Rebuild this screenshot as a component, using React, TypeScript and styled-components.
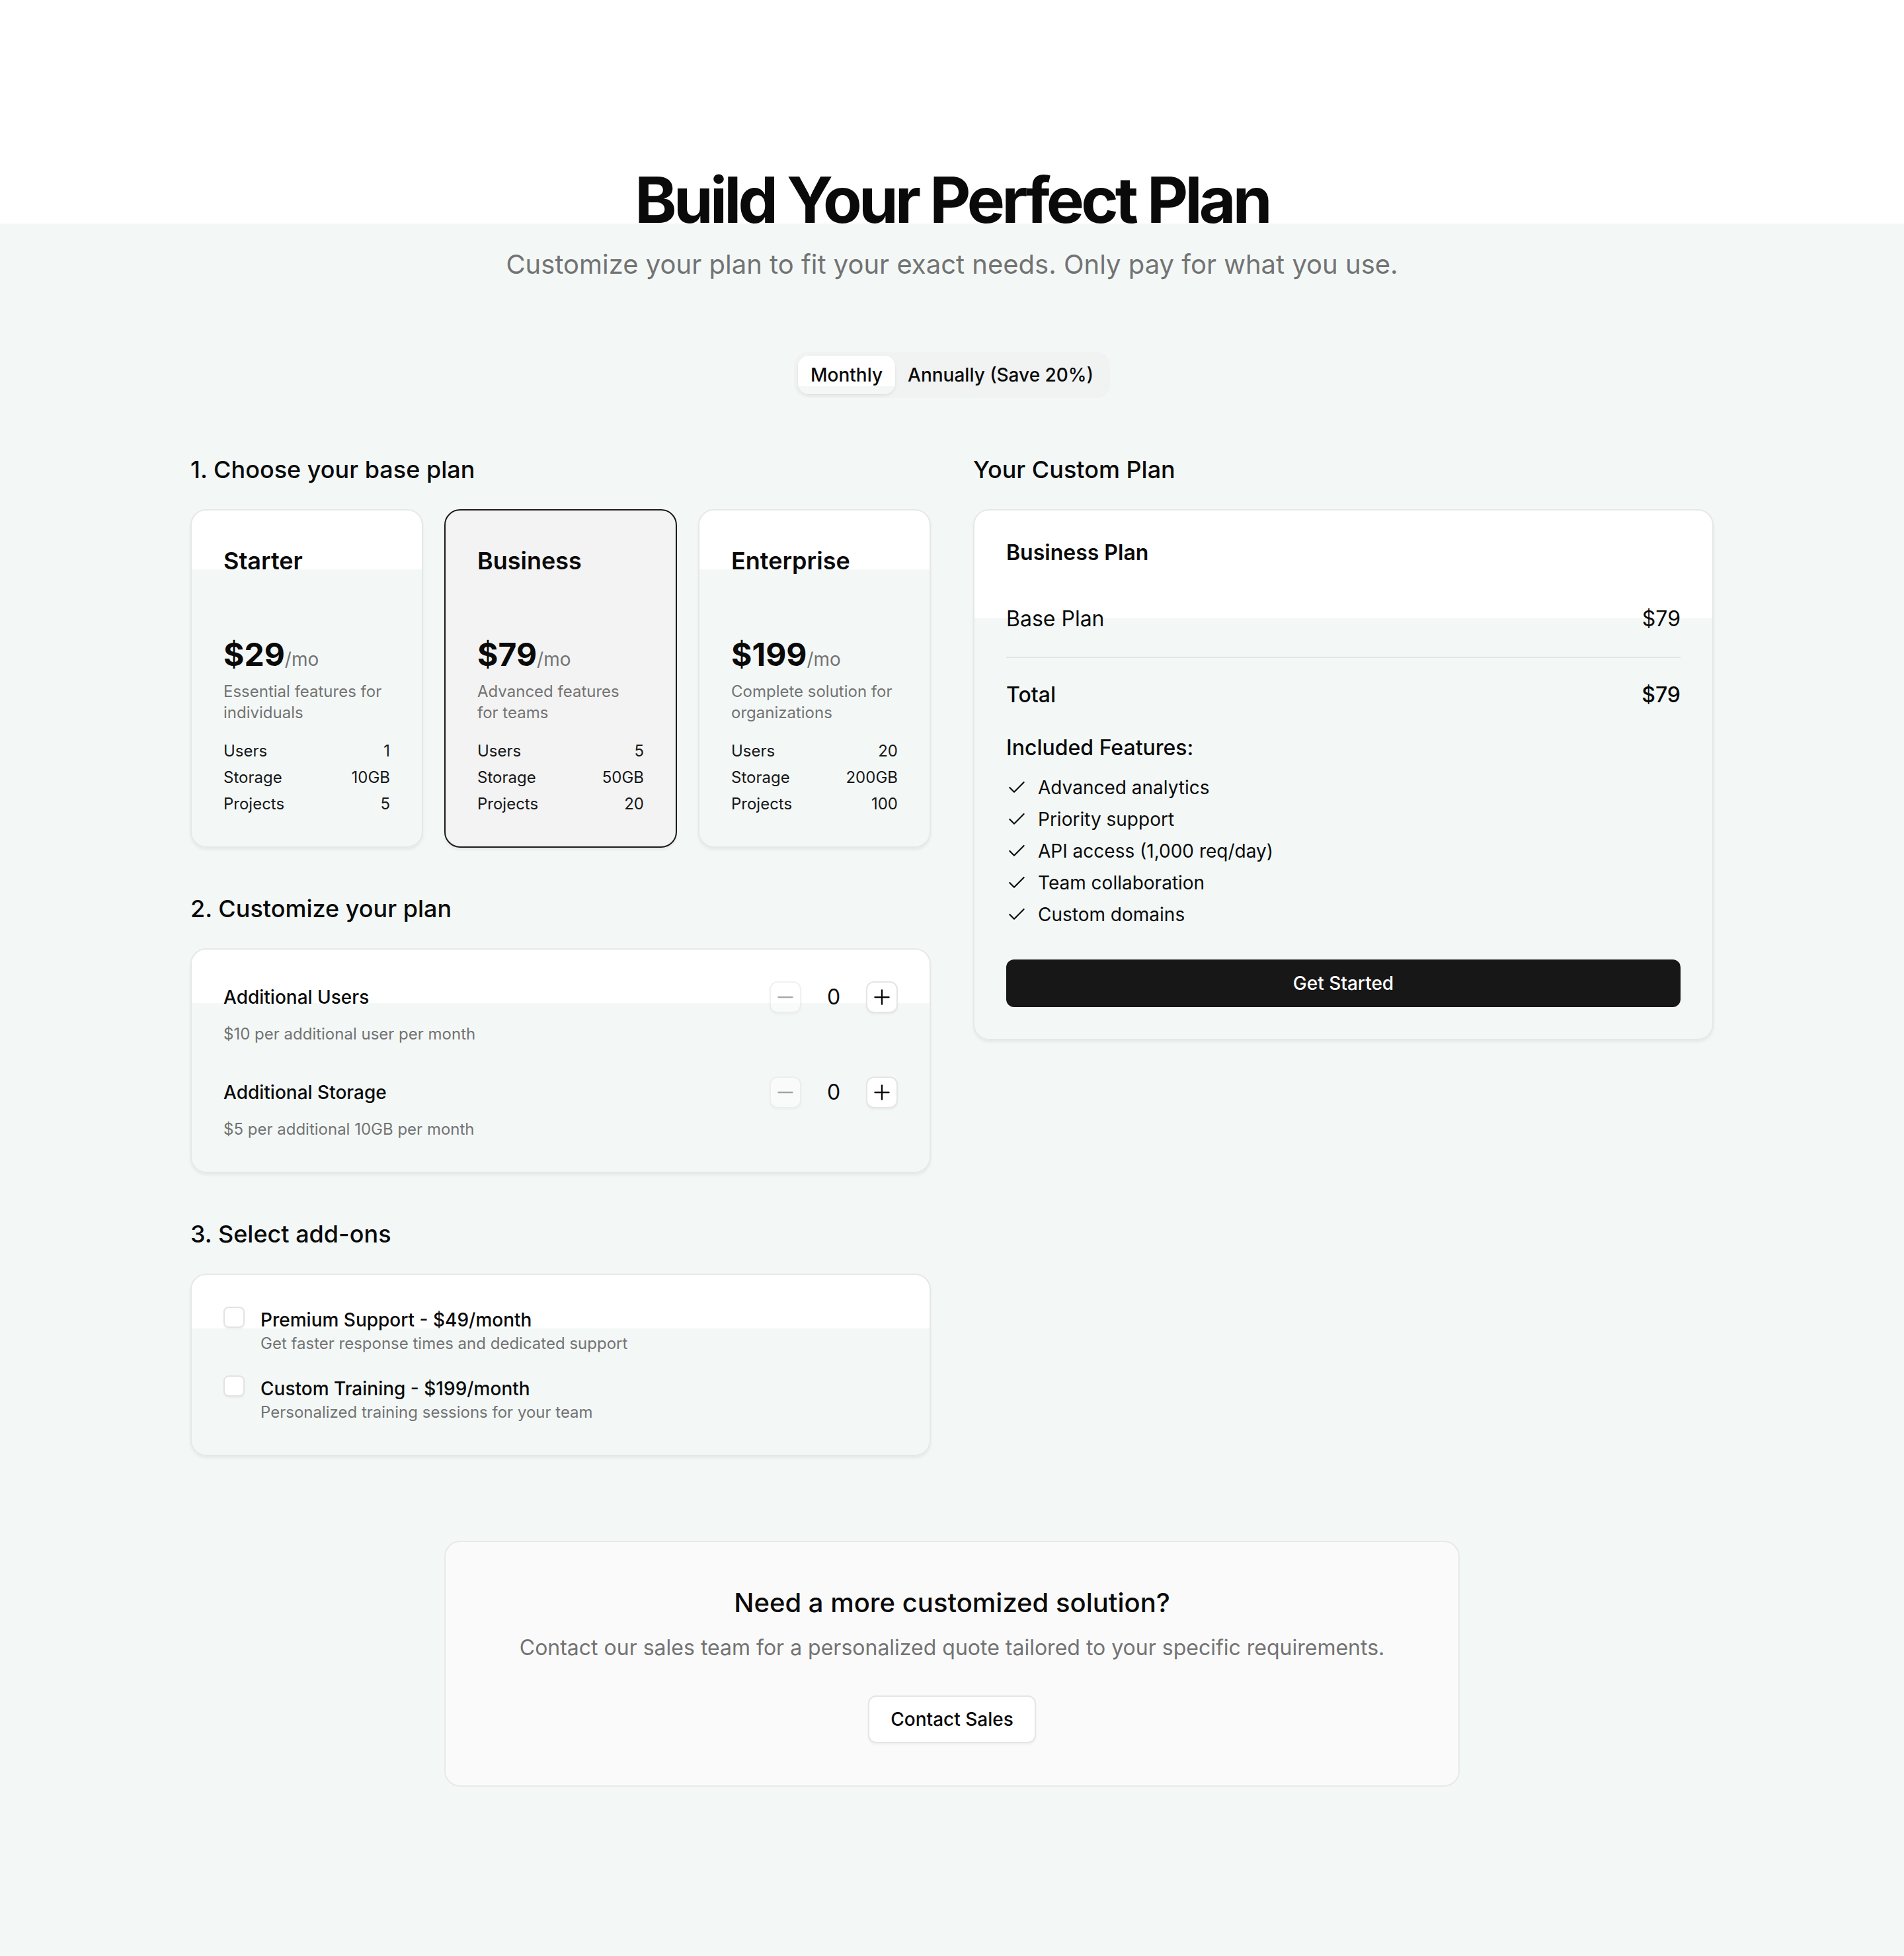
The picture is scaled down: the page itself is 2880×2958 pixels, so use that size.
import styled, { createGlobalStyle } from "styled-components";
import { Check, Minus, Plus } from "lucide-react";

const MINT = "#f3f8f7";

const GlobalStyle = createGlobalStyle`
  html {
    background: ${MINT} linear-gradient(#ffffff, #ffffff) no-repeat;
    background-size: 100% 338px;
  }
  body {
    margin: 0;
    font-family: Inter, "Noto Sans", "Liberation Sans", sans-serif;
    color: #0a0a0a;
  }
  * { box-sizing: border-box; }
`;

const Page = styled.div`
  width: 2304px;
  margin: 0 auto;
  padding: 254px 0 256px;
`;

const Header = styled.header`
  text-align: center;
`;

const Title = styled.h1`
  margin: 0;
  font-size: 96px;
  line-height: 96px;
  font-weight: 700;
  letter-spacing: -0.05em;
  color: #0a0a0a;
`;

const Subtitle = styled.p`
  margin: 22px 0 0;
  font-size: 40px;
  line-height: 56px;
  color: #737373;
`;

const ToggleWrap = styled.div`
  display: flex;
  justify-content: center;
  margin-top: 104px;
`;

const Toggle = styled.div`
  display: inline-flex;
  padding: 6px;
  border-radius: 20px;
  background: #f1f2f2;
`;

const ToggleButton = styled.button<{ $active?: boolean }>`
  height: 58px;
  padding: 0 19px;
  border: none;
  border-radius: 16px;
  font-family: inherit;
  font-size: 28px;
  font-weight: 500;
  color: #0a0a0a;
  background: ${(p) => (p.$active ? `linear-gradient(#fff 0 46px, ${MINT} 46px)` : "transparent")};
  box-shadow: ${(p) => (p.$active ? "0 2px 4px rgba(0,0,0,0.08)" : "none")};
`;

const Columns = styled.div`
  display: grid;
  grid-template-columns: 1120px 1120px;
  gap: 64px;
  align-items: start;
  margin-top: 80px;
`;

const Column = styled.div`
  display: flex;
  flex-direction: column;
  gap: 64px;
`;

const Section = styled.section``;

const SectionTitle = styled.h2`
  margin: 0 0 32px;
  font-size: 36px;
  line-height: 56px;
  font-weight: 500;
`;

const Card = styled.div<{ $split?: number }>`
  border: 2px solid #e6e8e8;
  border-radius: 24px;
  padding: 48px;
  background: ${(p) =>
    p.$split ? `linear-gradient(#fff 0 ${p.$split}px, ${MINT} ${p.$split}px)` : "#fff"};
  box-shadow: 0 3px 4px rgba(0, 0, 0, 0.06);
`;

const PlanGrid = styled.div`
  display: grid;
  grid-template-columns: repeat(3, 1fr);
  gap: 32px;
`;

const PlanCard = styled(Card)<{ $selected?: boolean }>`
  padding-bottom: 44px;
  ${(p) =>
    p.$selected &&
    `
    border-color: #1a1a1a;
    background: #f3f3f3;
  `}
`;

const PlanName = styled.h3`
  margin: 0;
  font-size: 36px;
  line-height: 56px;
  font-weight: 600;
`;

const Price = styled.div`
  display: flex;
  align-items: baseline;
  margin-top: 84px;
`;

const Amount = styled.span`
  font-size: 48px;
  line-height: 60px;
  font-weight: 700;
`;

const Per = styled.span`
  font-size: 28px;
  color: #737373;
`;

const PlanDesc = styled.p`
  margin: 10px 0 0;
  font-size: 24px;
  line-height: 32px;
  color: #737373;
  white-space: pre-line;
`;

const Specs = styled.div`
  margin-top: 22px;
`;

const SpecRow = styled.div`
  display: flex;
  justify-content: space-between;
  font-size: 24px;
  line-height: 40px;
  color: #171717;
`;

const OptionList = styled.div`
  display: flex;
  flex-direction: column;
  gap: 48px;
`;

const OptionHead = styled.div`
  display: flex;
  align-items: center;
  justify-content: space-between;
`;

const OptionTitle = styled.div`
  font-size: 28px;
  line-height: 40px;
  font-weight: 500;
`;

const OptionDesc = styled.div`
  margin-top: 16px;
  font-size: 24px;
  line-height: 32px;
  color: #737373;
`;

const Stepper = styled.div`
  display: flex;
  align-items: center;
  gap: 16px;
`;

const StepButton = styled.button`
  display: flex;
  align-items: center;
  justify-content: center;
  width: 48px;
  height: 48px;
  padding: 0;
  border: 2px solid #e5e5e5;
  border-radius: 12px;
  background: #fff;
  color: #0a0a0a;
  box-shadow: 0 2px 3px rgba(0, 0, 0, 0.05);
  &:disabled {
    opacity: 0.5;
    color: #555;
  }
`;

const StepValue = styled.span`
  width: 66px;
  text-align: center;
  font-size: 32px;
  line-height: 40px;
`;

const AddonList = styled.div`
  display: flex;
  flex-direction: column;
  gap: 32px;
`;

const Addon = styled.label`
  display: flex;
  align-items: flex-start;
  gap: 24px;
`;

const CheckBox = styled.span`
  flex: none;
  width: 32px;
  height: 32px;
  border: 2px solid #e3e3e3;
  border-radius: 8px;
  background: #fff;
  box-shadow: 0 2px 3px rgba(0, 0, 0, 0.05);
`;

const AddonTitle = styled.div`
  font-size: 28px;
  line-height: 40px;
  font-weight: 500;
`;

const AddonDesc = styled.div`
  font-size: 24px;
  line-height: 32px;
  color: #737373;
`;

const SummaryCard = styled(Card)`
  padding-top: 40px;
`;

const SummaryName = styled.h3`
  margin: 0;
  font-size: 32px;
  line-height: 48px;
  font-weight: 600;
`;

const Lines = styled.div`
  margin-top: 52px;
`;

const LineRow = styled.div<{ $strong?: boolean }>`
  display: flex;
  justify-content: space-between;
  font-size: 32px;
  line-height: 48px;
  font-weight: ${(p) => (p.$strong ? 500 : 400)};
`;

const Divider = styled.hr`
  margin: 33px 0 32px;
  border: none;
  border-top: 2px solid #e5e5e5;
`;

const FeaturesTitle = styled.h4`
  margin: 32px 0 0;
  font-size: 32px;
  line-height: 48px;
  font-weight: 500;
`;

const FeatureList = styled.ul`
  list-style: none;
  margin: 16px 0 0;
  padding: 0;
  display: flex;
  flex-direction: column;
  gap: 8px;
`;

const Feature = styled.li`
  display: flex;
  align-items: center;
  gap: 16px;
  font-size: 28px;
  line-height: 40px;
`;

const PrimaryButton = styled.button`
  width: 100%;
  height: 72px;
  margin-top: 48px;
  border: none;
  border-radius: 12px;
  background: #171717;
  color: #fff;
  font-family: inherit;
  font-size: 28px;
  font-weight: 500;
`;

const ContactCard = styled.div`
  width: 1536px;
  margin: 128px auto 0;
  padding: 64px;
  border: 2px solid #e8e8e8;
  border-radius: 24px;
  background: #fafafa;
  text-align: center;
`;

const ContactTitle = styled.h3`
  margin: 0;
  font-size: 40px;
  line-height: 56px;
  font-weight: 500;
`;

const ContactText = styled.p`
  margin: 16px 0 48px;
  font-size: 32px;
  line-height: 48px;
  color: #737373;
`;

const OutlineButton = styled.button`
  height: 72px;
  padding: 0 32px;
  border: 2px solid #e5e5e5;
  border-radius: 12px;
  background: #fff;
  font-family: inherit;
  font-size: 28px;
  font-weight: 500;
  color: #0a0a0a;
  box-shadow: 0 2px 3px rgba(0, 0, 0, 0.05);
`;

const plans = [
  { name: "Starter", price: 29, desc: "Essential features for\nindividuals", users: "1", storage: "10GB", projects: "5" },
  { name: "Business", price: 79, desc: "Advanced features\nfor teams", users: "5", storage: "50GB", projects: "20" },
  { name: "Enterprise", price: 199, desc: "Complete solution for\norganizations", users: "20", storage: "200GB", projects: "100" },
];

const options = [
  { title: "Additional Users", desc: "$10 per additional user per month" },
  { title: "Additional Storage", desc: "$5 per additional 10GB per month" },
];

const addons = [
  { title: "Premium Support - $49/month", desc: "Get faster response times and dedicated support" },
  { title: "Custom Training - $199/month", desc: "Personalized training sessions for your team" },
];

const features = [
  "Advanced analytics",
  "Priority support",
  "API access (1,000 req/day)",
  "Team collaboration",
  "Custom domains",
];

export default function App() {
  const selected = "Business";
  return (
    <>
      <GlobalStyle />
      <Page>
        <Header>
          <Title>Build Your Perfect Plan</Title>
          <Subtitle>Customize your plan to fit your exact needs. Only pay for what you use.</Subtitle>
        </Header>

        <ToggleWrap>
          <Toggle>
            <ToggleButton $active>Monthly</ToggleButton>
            <ToggleButton>Annually (Save 20%)</ToggleButton>
          </Toggle>
        </ToggleWrap>

        <Columns>
          <Column>
            <Section>
              <SectionTitle>1. Choose your base plan</SectionTitle>
              <PlanGrid>
                {plans.map((plan) => (
                  <PlanCard key={plan.name} $split={89} $selected={plan.name === selected}>
                    <PlanName>{plan.name}</PlanName>
                    <Price>
                      <Amount>${plan.price}</Amount>
                      <Per>/mo</Per>
                    </Price>
                    <PlanDesc>{plan.desc}</PlanDesc>
                    <Specs>
                      <SpecRow><span>Users</span><span>{plan.users}</span></SpecRow>
                      <SpecRow><span>Storage</span><span>{plan.storage}</span></SpecRow>
                      <SpecRow><span>Projects</span><span>{plan.projects}</span></SpecRow>
                    </Specs>
                  </PlanCard>
                ))}
              </PlanGrid>
            </Section>

            <Section>
              <SectionTitle>2. Customize your plan</SectionTitle>
              <Card $split={81}>
                <OptionList>
                  {options.map((o) => (
                    <div key={o.title}>
                      <OptionHead>
                        <OptionTitle>{o.title}</OptionTitle>
                        <Stepper>
                          <StepButton disabled>
                            <Minus size={36} strokeWidth={1.6} />
                          </StepButton>
                          <StepValue>0</StepValue>
                          <StepButton>
                            <Plus size={36} strokeWidth={1.6} />
                          </StepButton>
                        </Stepper>
                      </OptionHead>
                      <OptionDesc>{o.desc}</OptionDesc>
                    </div>
                  ))}
                </OptionList>
              </Card>
            </Section>

            <Section>
              <SectionTitle>3. Select add-ons</SectionTitle>
              <Card $split={81}>
                <AddonList>
                  {addons.map((a) => (
                    <Addon key={a.title}>
                      <CheckBox />
                      <div>
                        <AddonTitle>{a.title}</AddonTitle>
                        <AddonDesc>{a.desc}</AddonDesc>
                      </div>
                    </Addon>
                  ))}
                </AddonList>
              </Card>
            </Section>
          </Column>

          <Column>
            <Section>
              <SectionTitle>Your Custom Plan</SectionTitle>
              <SummaryCard $split={163}>
                <SummaryName>Business Plan</SummaryName>
                <Lines>
                  <LineRow><span>Base Plan</span><span>$79</span></LineRow>
                  <Divider />
                  <LineRow $strong><span>Total</span><span>$79</span></LineRow>
                </Lines>
                <FeaturesTitle>Included Features:</FeaturesTitle>
                <FeatureList>
                  {features.map((f) => (
                    <Feature key={f}>
                      <Check size={32} strokeWidth={1.6} />
                      {f}
                    </Feature>
                  ))}
                </FeatureList>
                <PrimaryButton>Get Started</PrimaryButton>
              </SummaryCard>
            </Section>
          </Column>
        </Columns>

        <ContactCard>
          <ContactTitle>Need a more customized solution?</ContactTitle>
          <ContactText>
            Contact our sales team for a personalized quote tailored to your specific requirements.
          </ContactText>
          <OutlineButton>Contact Sales</OutlineButton>
        </ContactCard>
      </Page>
    </>
  );
}
